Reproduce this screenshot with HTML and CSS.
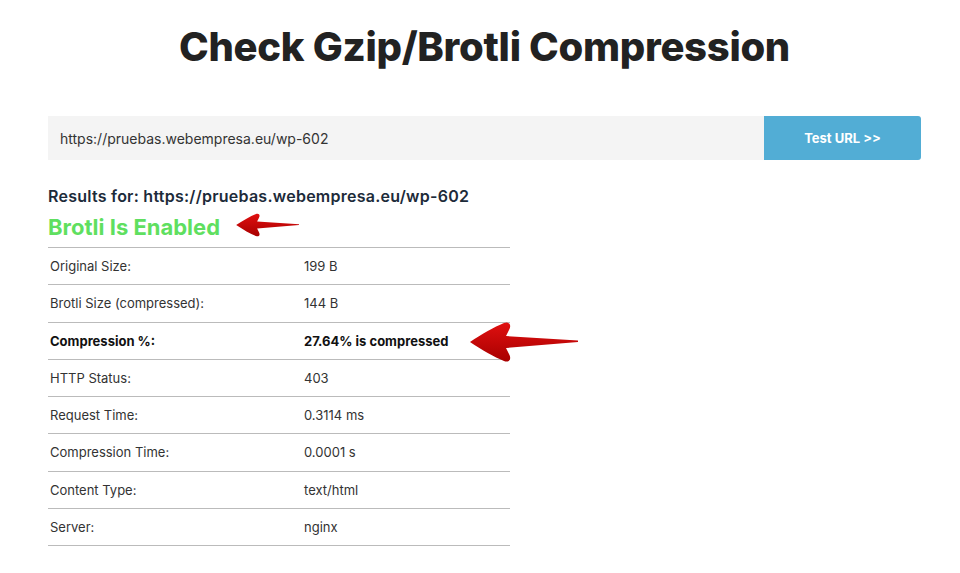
FILE: index.html
```html
<!DOCTYPE html>
<html lang="en">
<head>
    <meta charset="UTF-8">
    <meta name="viewport" content="width=device-width, initial-scale=1.0">
    <title>Check Gzip/Brotli Compression</title>
    <link rel="stylesheet" href="styles.css">
</head>
<body>
    <h1>Check Gzip/Brotli Compression</h1>
    <form class="check-form">
        <input type="text" class="url-input" value="https://pruebas.webempresa.eu/wp-602">
        <button type="button" class="test-btn">Test URL &gt;&gt;</button>
    </form>

    <div class="results">
        <h3 class="results-for">Results for: https://pruebas.webempresa.eu/wp-602</h3>
        <h2 class="status">Brotli Is Enabled</h2>
        <table class="result-table">
            <tbody>
                <tr><td>Original Size:</td><td>199 B</td></tr>
                <tr><td>Brotli Size (compressed):</td><td>144 B</td></tr>
                <tr class="strong"><td>Compression %:</td><td>27.64% is compressed</td></tr>
                <tr><td>HTTP Status:</td><td>403</td></tr>
                <tr><td>Request Time:</td><td>0.3114 ms</td></tr>
                <tr><td>Compression Time:</td><td>0.0001 s</td></tr>
                <tr><td>Content Type:</td><td>text/html</td></tr>
                <tr><td>Server:</td><td>nginx</td></tr>
            </tbody>
        </table>

        <!-- red annotation arrows -->
        <svg class="arrow arrow-status" width="64" height="32" viewBox="0 0 110 40">
            <defs>
                <linearGradient id="redA" x1="0" y1="0" x2="0" y2="1">
                    <stop offset="0" stop-color="#e01010"/>
                    <stop offset="1" stop-color="#a80000"/>
                </linearGradient>
            </defs>
            <path d="M2 20 C14 12 26 5 36 1 C41 -1 44 3 41 8 L38 14 L110 18.5 L110 20 L38 26 L41 32 C44 37 41 41 36 39 C26 35 14 28 2 20 Z" fill="url(#redA)"/>
        </svg>
        <svg class="arrow arrow-percent" width="110" height="40" viewBox="0 0 110 40">
            <defs>
                <linearGradient id="redB" x1="0" y1="0" x2="0" y2="1">
                    <stop offset="0" stop-color="#e01010"/>
                    <stop offset="1" stop-color="#a80000"/>
                </linearGradient>
            </defs>
            <path d="M2 20 C14 12 26 5 36 1 C41 -1 44 3 41 8 L38 14 L110 18.5 L110 20 L38 26 L41 32 C44 37 41 41 36 39 C26 35 14 28 2 20 Z" fill="url(#redB)"/>
        </svg>
    </div>
</body>
</html>
```

FILE: styles.css
```css
body {
    margin: 0;
    padding: 0 39px 0 48px;
    font-family: Inter, "Noto Sans", sans-serif;
    color: #333;
    background: #fff;
}
h1 {
    margin: 23px 0 45px;
    text-align: center;
    font-size: 40px;
    line-height: 48px;
    font-weight: 800;
    color: #222;
    letter-spacing: -0.3px;
}
.check-form {
    display: flex;
    height: 44px;
}
.url-input {
    flex: 1;
    border: none;
    background: #f4f4f4;
    padding: 0 12px;
    font-family: inherit;
    font-size: 14px;
    color: #333;
    outline: none;
}
.test-btn {
    width: 157px;
    border: none;
    border-radius: 0 3px 3px 0;
    background: #52add5;
    color: #fff;
    font-family: inherit;
    font-size: 13px;
    font-weight: 700;
    cursor: pointer;
}
.results {
    position: relative;
    margin-top: 24px;
}
.results-for {
    margin: 0;
    font-size: 16px;
    line-height: 24px;
    font-weight: 600;
    letter-spacing: 0.25px;
    color: #1d2b3a;
}
.status {
    margin: 5px 0 6px;
    font-size: 22px;
    line-height: 28px;
    font-weight: 700;
    color: #5fdf60;
}
.result-table {
    width: 462px;
    border-collapse: collapse;
    font-size: 13px;
    color: #333;
}
.result-table tr {
    border-top: 1px solid #bbb;
    border-bottom: 1px solid #bbb;
}
.result-table td {
    height: 36.25px;
    padding: 0 2px;
}
.result-table td:first-child {
    width: 250px;
}
.result-table .strong td {
    font-weight: 700;
    color: #111;
}
.arrow {
    position: absolute;
}
.arrow-status {
    left: 187px;
    top: 25px;
}
.arrow-percent {
    left: 420px;
    top: 138px;
}
```
